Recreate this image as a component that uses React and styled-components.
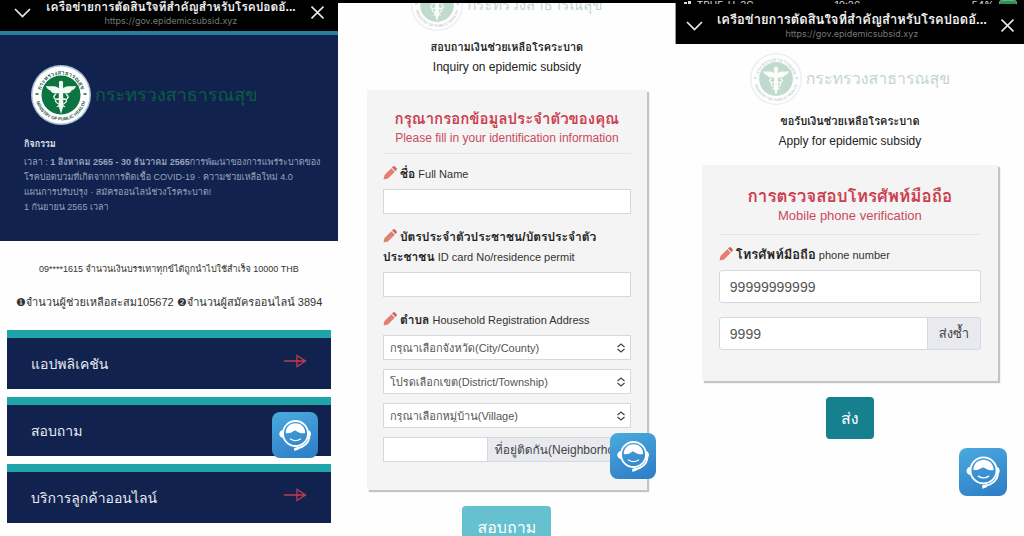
import React from "react";
import styled, { createGlobalStyle, css } from "styled-components";

const GlobalStyle = createGlobalStyle`
    * {
        box-sizing: border-box;
    }
    body {
        margin: 0;
        background-color: #fff;
        font-family: "Liberation Sans", "Loma", "Garuda", "Noto Sans Thai Looped", sans-serif;
        color: #333;
    }
    h1, h2, h3, p {
        margin: 0;
    }
    button, input, select {
        font-family: inherit;
        margin: 0;
    }
`

const Page = styled.div`
    display: grid;
    grid-template-columns: 33% 33% 34%;
    height: 100vh;
    overflow: hidden;
`

const Phone = styled.section`
    position: relative;
    display: flex;
    flex-direction: column;
    min-width: 0;
    background-color: #fefefe;
    overflow: hidden;
`

/* browser bar */
const BarWrap = styled.header`
    display: flex;
    align-items: flex-end;
    justify-content: space-between;
    flex-shrink: 0;
    height: ${(p) => p.$height};
    padding: 0 ${(p) => p.$side} 5px ${(p) => p.$side};
    background-color: #000;
    overflow: hidden;
`
const BarText = styled.div`
    display: flex;
    flex-direction: column;
    align-items: center;
    white-space: nowrap;
`
const BarTitle = styled.h1`
    font-size: ${(p) => p.$size};
    line-height: 18px;
    font-weight: bold;
    color: #f2f2f2;
`
const BarUrl = styled.span`
    font-family: Inter, sans-serif;
    font-size: 9px;
    line-height: 10px;
    color: #777;
`
const BarButton = styled.button`
    display: flex;
    padding: 0 0 2px;
    border: none;
    background: none;
    color: #e8e8e8;
`

const StatusBar = styled.div`
    display: grid;
    grid-template-columns: 1fr auto 1fr;
    align-items: end;
    flex-shrink: 0;
    height: 4px;
    padding: 0 5px 0 0;
    background-color: #000;
    color: #ddd;
    font-family: Inter, sans-serif;
    font-size: 10px;
    line-height: 10px;
    overflow: hidden;
`
const StatusGroup = styled.div`
    display: flex;
    align-items: flex-end;
    justify-content: ${(p) => (p.$end ? "flex-end" : "flex-start")};
    gap: 5px;
`

/* ministry logo */
const LogoRow = styled.div`
    display: flex;
    align-items: center;
    justify-content: ${(p) => (p.$faded ? "center" : "flex-start")};
    gap: 4px;
    opacity: ${(p) => (p.$faded ? 0.25 : 1)};
`
const LogoText = styled.span`
    font-size: ${(p) => p.$size};
    line-height: 26px;
    color: #0d5c46;
    white-space: nowrap;
`

/* first screen */
const Hero = styled.div`
    height: 210px;
    flex-shrink: 0;
    padding: 30px 20px 0 24px;
    border-top: 4px solid #2a7f9d;
    background-color: #11224f;
`
const HeroLogo = styled.div`
    padding-left: 7px;
`
const HeroTitle = styled.h2`
    margin-top: 12px;
    font-size: 9px;
    line-height: 15px;
    color: #e4e8f2;
`
const HeroText = styled.p`
    margin-top: 3px;
    font-size: 9px;
    line-height: 15px;
    color: #98a2bd;
    white-space: nowrap;
`
const Notice = styled.p`
    margin-top: ${(p) => p.$top};
    text-align: center;
    font-size: ${(p) => p.$size};
    line-height: 20px;
    color: #333;
    white-space: nowrap;
`
const Menu = styled.nav`
    display: flex;
    flex-direction: column;
    gap: 8px;
    padding: 0 7px;
    margin-top: 18px;
`
const MenuItem = styled.a`
    display: flex;
    align-items: center;
    justify-content: space-between;
    height: 59px;
    padding: 0 24px;
    border-top: 8px solid #1fa5a9;
    background-color: #11224f;
    color: #e8ecf4;
    font-size: 14px;
    text-decoration: none;
`

/* form screens */
const FormHead = styled.div`
    display: flex;
    flex-direction: column;
    align-items: center;
    margin-top: ${(p) => p.$top};
    text-align: center;
    color: #222;
`
const HeadThai = styled.h2`
    margin-top: 6px;
    font-size: 11px;
    line-height: 20px;
`
const HeadEnglish = styled.p`
    font-size: 12px;
    line-height: 20px;
`
const Card = styled.form`
    margin: ${(p) => p.$margin};
    padding: ${(p) => p.$padding};
    background-color: #f4f4f4;
    box-shadow: 2px 2px 1px #c4c4c8;
`
const CardTitle = styled.h3`
    font-size: ${(p) => (p.$large ? "17px" : "15px")};
    line-height: 24px;
    text-align: center;
    color: #cb3f50;
    white-space: nowrap;
`
const CardSub = styled.p`
    margin-bottom: 10px;
    padding-bottom: ${(p) => (p.$large ? "11px" : "8px")};
    border-bottom: 1px solid #e6e6e6;
    font-size: ${(p) => (p.$large ? "13px" : "12px")};
    line-height: 14px;
    text-align: center;
    color: #cb4a5e;
    white-space: nowrap;
`
const Label = styled.label`
    display: block;
    margin-bottom: 5px;
    font-size: 11px;
    line-height: 20px;
    color: #333;
    white-space: nowrap;

    b {
        font-size: ${(p) => (p.$large ? "13px" : "12px")};
        color: #222;
    }
    svg {
        margin-right: 3px;
        vertical-align: -2px;
    }
    input + & {
        margin-top: 13px;
    }
`
const field = css`
    display: block;
    width: 100%;
    border: 1px solid #d6d8e0;
    background-color: #fff;
    color: #555;
`
const Input = styled.input`
    ${field}
    height: ${(p) => (p.$large ? "33px" : "25px")};
    padding: 0 10px;
    border-radius: ${(p) => (p.$large ? "3px" : "0")};
    font-size: 14px;
`
const SelectWrap = styled.div`
    display: grid;
    align-items: center;
    margin-bottom: 9px;

    > * {
        grid-area: 1 / 1;
    }
    svg {
        justify-self: end;
        margin-right: 5px;
        pointer-events: none;
    }
`
const Select = styled.select`
    ${field}
    appearance: none;
    height: 25px;
    padding: 0 6px;
    border-radius: 0;
    font-size: 11px;
`
const Group = styled.div`
    display: flex;
    margin-top: ${(p) => p.$top || "0"};

    ${Input} {
        flex: 1;
        min-width: 0;
        border-top-right-radius: 0;
        border-bottom-right-radius: 0;
    }
`
const Addon = styled.label`
    display: flex;
    align-items: center;
    width: 143px;
    padding-left: 7px;
    border: 1px solid #d6d8e0;
    border-left: none;
    background-color: #e9eaf0;
    color: #444;
    font-size: 12px;
    white-space: nowrap;
    overflow: hidden;
`
const Resend = styled.button`
    width: 53px;
    padding: 0;
    border: 1px solid #d6d8e0;
    border-left: none;
    border-radius: 0 3px 3px 0;
    background-color: #e9eaf0;
    color: #444;
    font-size: 13px;
`
const Submit = styled.button`
    align-self: center;
    flex-shrink: 0;
    height: 42px;
    margin-top: 16px;
    padding: 0 15px;
    border: none;
    border-radius: 4px;
    background-color: ${(p) => p.$color};
    color: #fff;
    font-size: 16px;
`
const ChatButton = styled.button`
    position: absolute;
    right: ${(p) => p.$right};
    bottom: ${(p) => p.$bottom};
    width: ${(p) => p.$size};
    height: ${(p) => p.$size};
    padding: 0;
    border: none;
    border-radius: 8px;
    background: linear-gradient(160deg, #4aaade, #2d7cc6);

    svg {
        display: block;
        width: 100%;
        height: 100%;
    }
`
const ScrollThumb = styled.div`
    position: absolute;
    top: 3px;
    right: 0;
    width: 1px;
    height: 41px;
    background-color: #999;
`
const TopStrip = styled.div`
    position: absolute;
    top: 0;
    left: 0;
    right: 0;
    height: 3px;
    background-color: #000;
`

const Seal = ({ size, id }) => (
    <svg width={size} height={size} viewBox="0 0 60 60" aria-hidden="true">
        <defs>
            <path id={id + "-top"} d="M9.5 30a20.5 20.5 0 0 1 41 0" />
            <path id={id + "-low"} d="M4.500 30a25.500 25.500 0 0 0 51 0" />
        </defs>
        <circle cx="30" cy="30" r="30" fill="#a9bfd4" />
        <circle cx="30" cy="30" r="28.5" fill="#fff" />
        <circle cx="30" cy="30" r="19.5" fill="#0c7440" />
        <text fontSize="6" fontWeight="bold" fill="#24573f" textAnchor="middle">
            <textPath href={"#" + id + "-top"} startOffset="50%">กระทรวงสาธารณสุข</textPath>
        </text>
        <text fontSize="4.500" fontWeight="bold" fill="#24573f" textAnchor="middle">
            <textPath href={"#" + id + "-low"} startOffset="50%">MINISTRY OF PUBLIC HEALTH</textPath>
        </text>
        <path d="M4.5 29h3M52.500 29h3" stroke="#24573f" strokeWidth="1.500" />
        <g fill="#f3faf4">
            <circle cx="30" cy="18" r="2.200" />
            <path d="M28.800 24C25 20 20 22 15 21c1 3 3 4 4.500 4.500C20 28 24 29 28.500 28z" />
            <path d="M31.200 24C35 20 40 22 45 21c-1 3-3 4-4.500 4.500C40 28 36 29 31.500 28z" />
            <path d="M28 18h4l.3 23L30 49l-2.300-8z" />
        </g>
        <path
            d="M25 29c-4 3-2 6 3 5s9 0 7 3-8 3-9 5M35 29c4 3 2 6-3 5s-9 0-7 3 8 3 9 5"
            fill="none"
            stroke="#f3faf4"
            strokeWidth="1.300"
        />
    </svg>
)

const Logo = ({ size, text, id, faded }) => (
    <LogoRow $faded={faded}>
        <Seal size={size} id={id} />
        <LogoText $size={text}>กระทรวงสาธารณสุข</LogoText>
    </LogoRow>
)

const Pencil = () => (
    <svg width="14" height="14" viewBox="0 0 14 14" aria-hidden="true">
        <path d="M.5 13.500l1-4.500L8.300 2.200l3.500 3.500L5 12.500z" fill="#e27f70" />
        <path d="M9 1.500l1-1c.6-.5 1.400-.5 2 .1l1.400 1.400c.6.6.6 1.400.1 2l-1 1z" fill="#c9655c" />
    </svg>
)

const Arrow = () => (
    <svg width="23" height="20" viewBox="0 0 23 20" fill="none" stroke="#c23a50" strokeWidth="1.300" aria-hidden="true">
        <path d="M0 7h21M13 1.500v11L21.500 7z" />
    </svg>
)

const UpDown = () => (
    <svg width="10" height="10" viewBox="0 0 10 10" fill="none" stroke="#444" strokeWidth="1.200" aria-hidden="true">
        <path d="M1.500 4L5 1l3.500 3M1.500 6L5 9l3.500-3" />
    </svg>
)

const Chat = (props) => (
    <ChatButton type="button" aria-label="Chat" {...props}>
        <svg viewBox="0 0 46 46" fill="none">
            <circle cx="23.500" cy="21.500" r="12.500" stroke="#fff" strokeWidth="1.800" />
            <path d="M13.800 21c0-13 19.400-13 19.400 0-3 .6-6 .2-8.200-1.500-1.500-1.200-2.500-1.200-4 0-2 1.500-4 2-7.200 1.500z" fill="#fff" />
            <path d="M18.500 27c3 2 7 2 10 0" stroke="#fff" strokeWidth="1.300" strokeLinecap="round" />
            <path d="M11 18c-5 1-5 7 0 8zM36 18c4 1 4 7 0 8z" fill="#fff" />
            <path d="M37.500 25c-1 6-6 10-12.500 11.500" stroke="#fff" strokeWidth="1.800" />
            <path d="M22 36l5-1.500-.5 3-4 1.500z" fill="#fff" />
        </svg>
    </ChatButton>
)

const Signal = () => (
    <svg width="16" height="9" viewBox="0 0 16 9" fill="#ddd" aria-hidden="true">
        <path d="M0 4h3v4H0zM4 3h3v5H4zM8 1h3v7H8zM12 0h3v8h-3z" />
    </svg>
)

const Battery = () => (
    <svg width="20" height="10" viewBox="0 0 20 10" aria-hidden="true">
        <rect x=".5" y=".5" width="17" height="8" rx="2" fill="#2f8f57" stroke="#7aa88c" />
    </svg>
)

const BrowserBar = ({ height, side, title }) => (
    <BarWrap $height={height} $side={side}>
        <BarButton type="button" aria-label="Minimize">
            <svg width="17" height="21" viewBox="0 0 17 21" fill="none" stroke="currentColor" strokeWidth="1.700">
                <path d="M1 6l7.500 7.500L16 6" />
            </svg>
        </BarButton>
        <BarText>
            <BarTitle $size={title}>เครือข่ายการตัดสินใจที่สำคัญสำหรับโรคปอดอั...</BarTitle>
            <BarUrl>https://gov.epidemicsubsid.xyz</BarUrl>
        </BarText>
        <BarButton type="button" aria-label="Close">
            <svg width="13" height="21" viewBox="0 0 13 21" fill="none" stroke="currentColor" strokeWidth="1.700">
                <path d="M.5 3.500l12 12M12.500 3.500l-12 12" />
            </svg>
        </BarButton>
    </BarWrap>
)

const menu = [
    { name: "แอปพลิเคชัน", arrow: true },
    { name: "สอบถาม", arrow: false },
    { name: "บริการลูกค้าออนไลน์", arrow: true },
]

const selects = [
    "กรุณาเลือกจังหวัด(City/County)",
    "โปรดเลือกเขต(District/Township)",
    "กรุณาเลือกหมู่บ้าน(Village)",
]

const HomeScreen = () => (
    <Phone>
        <BrowserBar height="31px" side="14px" title="12px" />
        <Hero>
            <HeroLogo>
                <Logo size={60} text="18px" id="home" />
            </HeroLogo>
            <HeroTitle>กิจกรรม</HeroTitle>
            <HeroText>
                เวลา : <b>1 สิงหาคม 2565 - 30 ธันวาคม 2565</b>การพัฒนาของการแพร่ระบาดของ<br />
                โรคปอดบวมที่เกิดจากการติดเชื้อ COVID-19 · ความช่วยเหลือใหม่ 4.0<br />
                แผนการปรับปรุง · สมัครออนไลน์ช่วงโรคระบาด!<br />
                1 กันยายน 2565 เวลา
            </HeroText>
        </Hero>
        <Notice $top="18px" $size="9px">09****1615 จำนวนเงินบรรเทาทุกข์ได้ถูกนำไปใช้สำเร็จ 10000 THB</Notice>
        <Notice $top="13px" $size="11px">❶จำนวนผู้ช่วยเหลือสะสม105672 ❷จำนวนผู้สมัครออนไลน์ 3894</Notice>
        <Menu>
            {
                menu.map((item) => (
                    <MenuItem href="#" key={item.name}>
                        {item.name}
                        {item.arrow && <Arrow />}
                    </MenuItem>
                ))
            }
        </Menu>
        <Chat $right="20px" $bottom="78px" $size="46px" />
    </Phone>
)

const InquiryScreen = () => (
    <Phone>
        <FormHead $top="-21px">
            <Logo size={52} text="15px" id="inquiry" faded />
            <HeadThai>สอบถามเงินช่วยเหลือโรคระบาด</HeadThai>
            <HeadEnglish>Inquiry on epidemic subsidy</HeadEnglish>
        </FormHead>
        <Card $margin="13px 29px 0" $padding="17px 16px 28px">
            <CardTitle>กรุณากรอกข้อมูลประจำตัวของคุณ</CardTitle>
            <CardSub>Please fill in your identification information</CardSub>
            <Label htmlFor="name"><Pencil /><b>ชื่อ</b> Full Name</Label>
            <Input id="name" />
            <Label htmlFor="card"><Pencil /><b>บัตรประจำตัวประชาชน/บัตรประจำตัว<br />ประชาชน</b> ID card No/residence permit</Label>
            <Input id="card" />
            <Label htmlFor="address0"><Pencil /><b>ตำบล</b> Household Registration Address</Label>
            {
                selects.map((text, i) => (
                    <SelectWrap key={text}>
                        <Select id={"address" + i} aria-label={text}>
                            <option>{text}</option>
                        </Select>
                        <UpDown />
                    </SelectWrap>
                ))
            }
            <Group>
                <Input id="area" />
                <Addon htmlFor="area">ที่อยู่ติดกัน(Neighborhood)</Addon>
            </Group>
        </Card>
        <Submit type="button" $color="#65c1d0">สอบถาม</Submit>
        <TopStrip />
        <ScrollThumb />
        <Chat $right="20px" $bottom="57px" $size="46px" />
    </Phone>
)

const VerifyScreen = () => (
    <Phone>
        <StatusBar>
            <StatusGroup>
                <Signal />
                <span>TRUE-H</span>
                <span>3G</span>
            </StatusGroup>
            <span>10:26</span>
            <StatusGroup $end>
                <span>54%</span>
                <Battery />
            </StatusGroup>
        </StatusBar>
        <BrowserBar height="40px" side="10px" title="13px" />
        <FormHead $top="9px">
            <Logo size={52} text="16px" id="verify" faded />
            <HeadThai>ขอรับเงินช่วยเหลือโรคระบาด</HeadThai>
            <HeadEnglish>Apply for epidemic subsidy</HeadEnglish>
        </FormHead>
        <Card $margin="14px 26px 0" $padding="20px 17px 31px">
            <CardTitle $large>การตรวจสอบโทรศัพท์มือถือ</CardTitle>
            <CardSub $large>Mobile phone verification</CardSub>
            <Label $large htmlFor="phone"><Pencil /><b>โทรศัพท์มือถือ</b> phone number</Label>
            <Input id="phone" $large defaultValue="99999999999" />
            <Group $top="14px">
                <Input $large aria-label="Code" defaultValue="9999" />
                <Resend type="button">ส่งซ้ำ</Resend>
            </Group>
        </Card>
        <Submit type="button" $color="#17808f">ส่ง</Submit>
        <Chat $right="17px" $bottom="40px" $size="48px" />
    </Phone>
)

const App = () => {
    return (
        <>
            <GlobalStyle />
            <Page>
                <HomeScreen />
                <InquiryScreen />
                <VerifyScreen />
            </Page>
        </>
    )
}

export default App;
